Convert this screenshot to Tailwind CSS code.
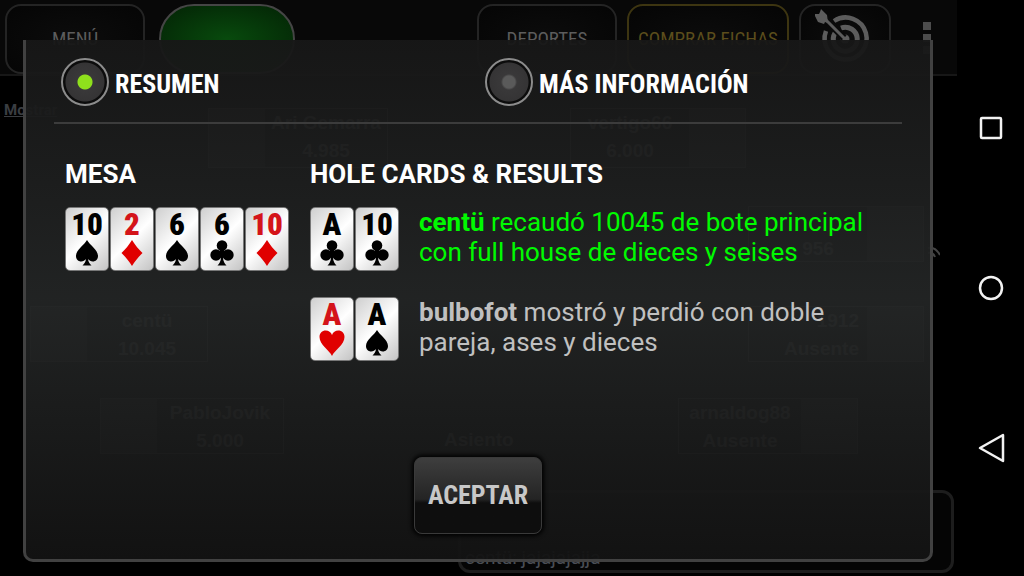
<!DOCTYPE html>
<html lang="es">
<head>
    <meta charset="UTF-8">
    <meta name="viewport" content="width=device-width, initial-scale=1.0">
    <title>Resumen de la mano</title>
    <script src="https://cdn.jsdelivr.net/npm/@tailwindcss/browser@4"></script>
</head>
<body class="bg-black h-screen overflow-hidden flex font-['Roboto',sans-serif] text-white">

    <!-- Suit shapes shared by all the cards -->
    <svg class="hidden">
        <symbol id="spade" viewBox="0 0 24 26">
            <path d="M12 0C9.500 5 1 9.500 1 16c0 3.300 2.300 5.500 5.200 5.500 2 0 3.600-.9 4.700-2.500-.2 2.700-1.300 4.700-3.400 6.500h9c-2.100-1.800-3.200-3.800-3.400-6.500 1.100 1.600 2.700 2.500 4.700 2.500 2.900 0 5.200-2.200 5.200-5.500C23 9.500 14.500 5 12 0z"/>
        </symbol>
        <symbol id="club" viewBox="0 0 24 26">
            <circle cx="12" cy="5.500" r="5.300"/>
            <circle cx="6" cy="15" r="5.700"/>
            <circle cx="18" cy="15" r="5.700"/>
            <path d="M10 8h4l1 8-2 2c.3 3 1.500 5.500 3.500 7.500h-9c2-2 3.200-4.500 3.500-7.500l-2-2z"/>
        </symbol>
        <symbol id="diamond" viewBox="0 0 24 26">
            <path d="M12 0c3 5 6.500 9 10.500 13-4 4-7.500 8-10.500 13-3-5-6.500-9-10.500-13C5.500 9 9 5 12 0z"/>
        </symbol>
        <symbol id="heart" viewBox="0 0 26 26">
            <path d="M13 26C10.500 20 .5 15 .5 7 .5 3 3.200.5 6.700.5 9.600.5 12 2.200 13 5c1-2.800 3.400-4.500 6.300-4.500 3.500 0 6.200 2.500 6.200 6.500 0 8-10 13-12.500 19z"/>
        </symbol>
    </svg>

    <main class="relative flex-1 min-w-0 flex flex-col">

        <!-- Top bar of the table, dimmed behind the dialog -->
        <header class="h-[76px] shrink-0 flex items-start pt-1 pl-[5px] pr-[26px] bg-[#080808] border-b-2 border-[#171717] font-['Roboto_Condensed','Roboto',sans-serif] text-[19px] text-[#5c5c5c]">
            <button class="w-[140px] h-[70px] rounded-2xl border-2 border-[#242424] bg-[radial-gradient(#0c0c0c,#050505)]">MENÚ</button>
            <button aria-label="Mesa" class="ml-[14px] w-[136px] h-[70px] rounded-[36px] border-2 border-[#454545] bg-[radial-gradient(#084a0d,#032205)]"></button>
            <button class="ml-auto w-[140px] h-[70px] rounded-2xl border-2 border-[#242424] bg-[radial-gradient(#0c0c0c,#050505)]">DEPORTES</button>
            <button class="ml-[10px] w-[162px] h-[70px] rounded-2xl border-2 border-[#3d3511] bg-[radial-gradient(#0c0c0c,#050505)] text-[#5b4d1c] whitespace-nowrap">COMPRAR FICHAS</button>
            <button aria-label="Objetivos" class="ml-[10px] w-[92px] h-[70px] rounded-2xl border-2 border-[#242424] bg-[radial-gradient(#0c0c0c,#050505)] flex justify-center">
                <svg class="w-[60px] h-[66px]" viewBox="0 0 60 66" fill="none" stroke="#5c5c5c">
                    <path d="M19 15a21 21 0 1 1-8 10" stroke-width="4.500"/>
                    <path d="M26 22a12 12 0 1 1-6 5" stroke-width="5"/>
                    <circle cx="30" cy="33" r="4.500" fill="#5c5c5c" stroke="none"/>
                    <path d="M9 11l20 21" stroke="#0a0a0a" stroke-width="7"/>
                    <path d="M7 10l23 23" stroke-width="3"/>
                    <path d="M-1 8l5 0 1-2 1-3 6 6 1 8-3-1-1 2-6-2z" fill="#5c5c5c" stroke="none"/>
                </svg>
            </button>
            <button aria-label="Más opciones" class="ml-8 mt-[18px] flex flex-col gap-1">
                <span class="size-2 bg-[#4c4c4c]"></span>
                <span class="size-2 bg-[#4c4c4c]"></span>
                <span class="size-2 bg-[#4c4c4c]"></span>
            </button>
        </header>

        <!-- Table with the seats -->
        <section class="relative flex-1 text-center text-[19px] leading-7 font-bold text-[#666] font-['Liberation_Sans',sans-serif]">
            <a href="#" class="absolute left-1 top-6 text-[15px] leading-5 font-bold text-[#3a3d42] underline font-['Roboto',sans-serif]">Mostrar</a>
            <div class="absolute left-[208px] top-8 w-[180px] h-[60px] flex border border-[#444]"><span class="w-14 bg-[#222]"></span><p class="flex-1">Ari Gemarra<br>4.985</p></div>
            <div class="absolute left-[570px] top-8 w-[176px] h-[60px] flex border border-[#444]"><p class="flex-1">vertigo66<br>6.000</p><span class="w-14 bg-[#222]"></span></div>
            <div class="absolute left-[30px] top-[230px] w-[178px] h-[56px] flex border border-[#444]"><span class="w-14 bg-[#222]"></span><p class="flex-1">centü<br>10.045</p></div>
            <div class="absolute left-[100px] top-[322px] w-[184px] h-[56px] flex border border-[#444]"><span class="w-14 bg-[#222]"></span><p class="flex-1">PabloJovik<br>5.000</p></div>
            <div class="absolute left-[678px] top-[322px] w-[180px] h-[56px] flex border border-[#444]"><p class="flex-1">arnaldog88<br>Ausente</p><span class="w-14 bg-[#222]"></span></div>
            <div class="absolute left-[748px] top-[230px] w-[176px] h-[56px] flex border border-[#444]"><p class="flex-1 text-right pr-2">1912<br>Ausente</p><span class="w-14 bg-[#222]"></span></div>
            <div class="absolute left-[748px] top-[130px] w-[176px] h-[56px] flex border border-[#444]"><p class="flex-1 pt-7 pl-5">956</p><span class="w-14 bg-[#222]"></span></div>
            <p class="absolute left-[444px] top-[350px]">Asiento</p>
            <svg class="absolute left-[924px] top-[166px] w-4 h-6" viewBox="0 0 16 24" fill="none" stroke="#444" stroke-width="2"><path d="M4 6q7-2 12 7M4 11q5-1 7 4"/></svg>
        </section>

        <!-- Chat box -->
        <aside class="absolute left-[458px] right-[3px] bottom-[3px] h-[83px] rounded-xl border-[3px] border-[#1d1d1d] bg-[#050505] px-1 flex flex-col justify-end text-[19px] leading-6 text-[#4a4e56]">
            <p>centü: jajajajajja</p>
        </aside>

        <!-- Hand summary dialog -->
        <div role="dialog" aria-label="Resumen de la mano" class="absolute top-10 bottom-[14px] left-[23px] right-6 rounded-b-[10px] border-[3px] border-t-0 border-[#414141] bg-linear-to-b from-[#171717]/95 via-[#232525]/95 to-[#131313]/95 px-7 flex flex-col">

            <div class="grid grid-cols-2 pt-[18px] pb-4 border-b-2 border-[#3c3c3c] font-['Roboto_Condensed','Roboto',sans-serif] font-bold text-[26px]">
                <label class="flex items-center gap-[6px] pl-[7px]">
                    <input type="radio" name="view" checked class="appearance-none size-12 shrink-0 rounded-full border-2 border-[#8c8c8c] bg-[radial-gradient(circle,#5a5a5a_6px,#393839_8px,#353435_19px,#0c0c0c_20px)] checked:bg-[radial-gradient(circle,#8fe01c_7px,#393839_8px,#353435_19px,#0c0c0c_20px)]">
                    <span class="pt-1">RESUMEN</span>
                </label>
                <label class="flex items-center gap-[6px] pl-[7px]">
                    <input type="radio" name="view" class="appearance-none size-12 shrink-0 rounded-full border-2 border-[#8c8c8c] bg-[radial-gradient(circle,#5a5a5a_6px,#393839_8px,#353435_19px,#0c0c0c_20px)] checked:bg-[radial-gradient(circle,#8fe01c_7px,#393839_8px,#353435_19px,#0c0c0c_20px)]">
                    <span class="pt-1">MÁS INFORMACIÓN</span>
                </label>
            </div>

            <div class="flex pl-[11px] pt-[35px] text-[26px] leading-[30px]">
                <section class="w-[245px] shrink-0">
                    <h2 class="font-bold">MESA</h2>
                    <div class="mt-[18px] flex gap-px text-black font-['Roboto_Condensed','Roboto',sans-serif] font-black text-[31px] leading-[30px]">
                        <div class="w-11 h-16 pt-[2px] rounded-[5px] border border-[#777] bg-linear-135 from-[#cfcfcf] via-white to-[#c4c4c4] flex flex-col items-center">
                            <span>10</span>
                            <svg class="w-6 h-[26px]"><use href="#spade"/></svg>
                        </div>
                        <div class="w-11 h-16 pt-[2px] rounded-[5px] border border-[#777] bg-linear-135 from-[#cfcfcf] via-white to-[#c4c4c4] flex flex-col items-center text-[#d4141a]">
                            <span>2</span>
                            <svg class="w-6 h-[26px] fill-[#e00000]"><use href="#diamond"/></svg>
                        </div>
                        <div class="w-11 h-16 pt-[2px] rounded-[5px] border border-[#777] bg-linear-135 from-[#cfcfcf] via-white to-[#c4c4c4] flex flex-col items-center">
                            <span>6</span>
                            <svg class="w-6 h-[26px]"><use href="#spade"/></svg>
                        </div>
                        <div class="w-11 h-16 pt-[2px] rounded-[5px] border border-[#777] bg-linear-135 from-[#cfcfcf] via-white to-[#c4c4c4] flex flex-col items-center">
                            <span>6</span>
                            <svg class="w-6 h-[26px]"><use href="#club"/></svg>
                        </div>
                        <div class="w-11 h-16 pt-[2px] rounded-[5px] border border-[#777] bg-linear-135 from-[#cfcfcf] via-white to-[#c4c4c4] flex flex-col items-center text-[#d4141a]">
                            <span>10</span>
                            <svg class="w-6 h-[26px] fill-[#e00000]"><use href="#diamond"/></svg>
                        </div>
                    </div>
                </section>

                <section class="flex-1 min-w-0">
                    <h2 class="font-bold">HOLE CARDS &amp; RESULTS</h2>
                    <div class="mt-[18px] flex gap-5">
                        <div class="flex shrink-0 gap-px text-black font-['Roboto_Condensed','Roboto',sans-serif] font-black text-[31px] leading-[30px]">
                            <div class="w-11 h-16 pt-[2px] rounded-[5px] border border-[#777] bg-linear-135 from-[#cfcfcf] via-white to-[#c4c4c4] flex flex-col items-center">
                                <span>A</span>
                                <svg class="w-6 h-[26px]"><use href="#club"/></svg>
                            </div>
                            <div class="w-11 h-16 pt-[2px] rounded-[5px] border border-[#777] bg-linear-135 from-[#cfcfcf] via-white to-[#c4c4c4] flex flex-col items-center">
                                <span>10</span>
                                <svg class="w-6 h-[26px]"><use href="#club"/></svg>
                            </div>
                        </div>
                        <p class="max-w-[450px] text-[#00fa00]"><b>centü</b> recaudó 10045 de bote principal con full house de dieces y seises</p>
                    </div>
                    <div class="mt-[26px] flex gap-5">
                        <div class="flex shrink-0 gap-px text-black font-['Roboto_Condensed','Roboto',sans-serif] font-black text-[31px] leading-[30px]">
                            <div class="w-11 h-16 pt-[2px] rounded-[5px] border border-[#777] bg-linear-135 from-[#cfcfcf] via-white to-[#c4c4c4] flex flex-col items-center text-[#d4141a]">
                                <span>A</span>
                                <svg class="w-[26px] h-[26px] fill-[#e00000]"><use href="#heart"/></svg>
                            </div>
                            <div class="w-11 h-16 pt-[2px] rounded-[5px] border border-[#777] bg-linear-135 from-[#cfcfcf] via-white to-[#c4c4c4] flex flex-col items-center">
                                <span>A</span>
                                <svg class="w-6 h-[26px]"><use href="#spade"/></svg>
                            </div>
                        </div>
                        <p class="max-w-[450px] text-[#c0c0c0]"><b>bulbofot</b> mostró y perdió con doble pareja, ases y dieces</p>
                    </div>
                </section>
            </div>

            <button class="mt-auto mb-[25px] self-center w-32 h-[77px] rounded-lg border border-[#3a3a3a] bg-linear-to-b from-[#3e3e3e] via-[#242424] via-55% to-[#0e0e0e] to-60% shadow-[0_0_4px_2px_#000] font-['Roboto_Condensed','Roboto',sans-serif] font-bold text-[26px] text-[#c8c8c8]">ACEPTAR</button>
        </div>
    </main>

    <!-- Android navigation bar -->
    <nav class="w-[67px] shrink-0 py-12 flex flex-col">
        <button aria-label="Recientes" class="flex-1 flex items-center justify-center">
            <svg class="size-7" viewBox="0 0 28 28" fill="none" stroke="#f2f2f2" stroke-width="2.500"><rect x="4" y="4" width="20" height="20" rx="1"/></svg>
        </button>
        <button aria-label="Inicio" class="flex-1 flex items-center justify-center">
            <svg class="size-7" viewBox="0 0 28 28" fill="none" stroke="#f2f2f2" stroke-width="2.500"><circle cx="14" cy="14" r="11"/></svg>
        </button>
        <button aria-label="Atrás" class="flex-1 flex items-center justify-center">
            <svg class="w-7 h-8" viewBox="0 0 28 32" fill="none" stroke="#f2f2f2" stroke-width="2.500" stroke-linejoin="round"><path d="M26 3v26L3 16z"/></svg>
        </button>
    </nav>
</body>
</html>
